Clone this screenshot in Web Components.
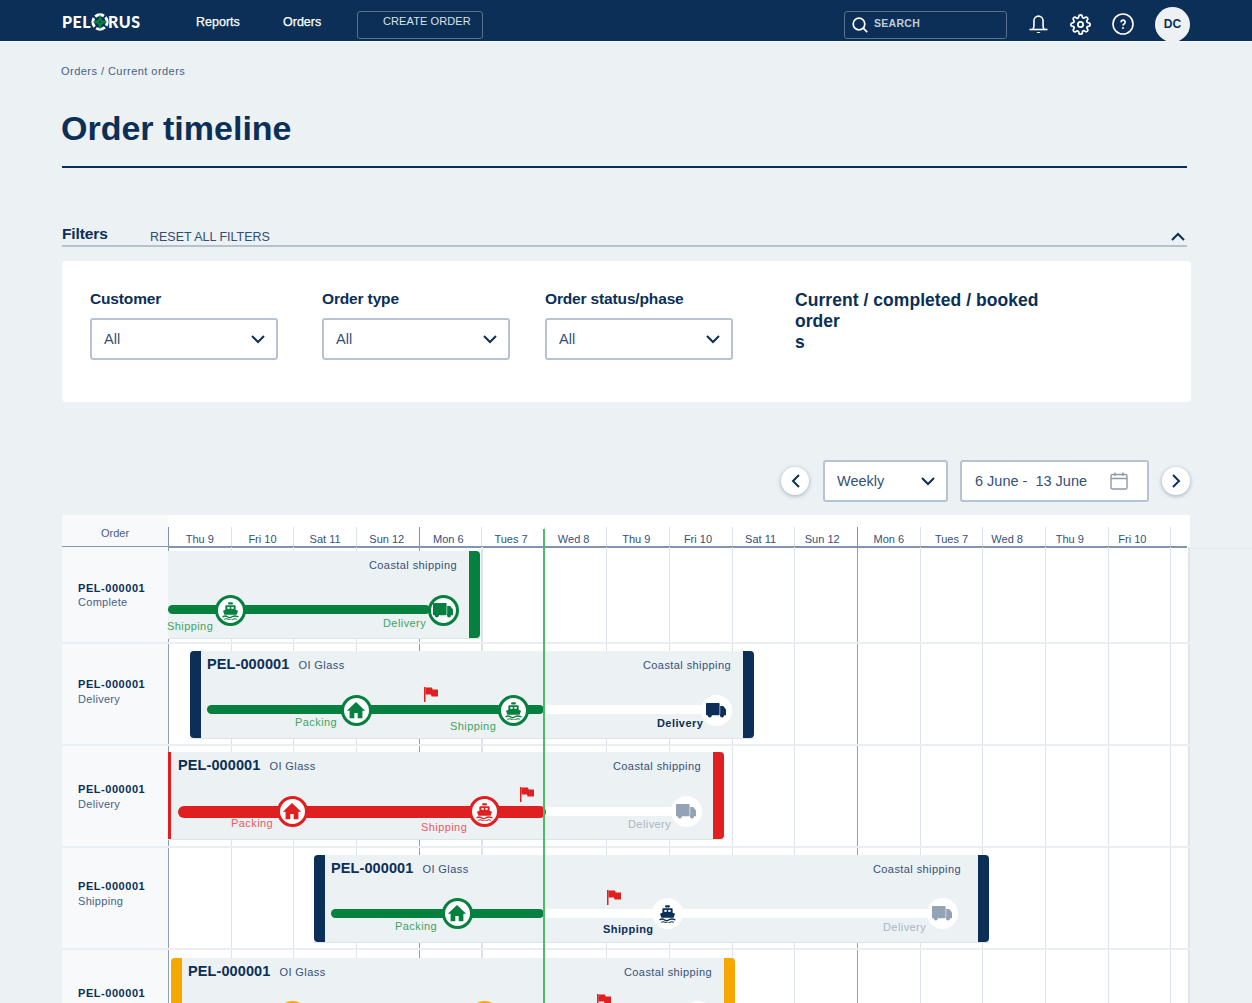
<!DOCTYPE html>
<html lang="en">
<head>
<meta charset="utf-8">
<title>Order timeline</title>
<style>
  html, body { margin: 0; height: 100%; overflow: hidden; }
  body { background: #ecf1f4; color: #0b2f56; font-family: "Liberation Sans", Arial, sans-serif; }
</style>
</head>
<body>
<app-header></app-header>
<page-title crumbs="Orders / Current orders" heading="Order timeline"></page-title>
<filter-panel></filter-panel>
<range-controls></range-controls>
<order-timeline>
  <order-row height="97" order="PEL-000001" status="Complete">
    <gantt-bar left="0" top="4" width="312" end="green" service="Coastal shipping" service-right="23">
      <gantt-seg from="0" to="262" y="58" tone="green"></gantt-seg>
      <gantt-stop x="62" y="59" kind="ship" tone="green" label="Shipping" lx="-1" ly="75"></gantt-stop>
      <gantt-stop x="275" y="59" kind="truck" tone="green" label="Delivery" lx="215" ly="72"></gantt-stop>
    </gantt-bar>
  </order-row>
  <order-row height="102" info-top="33" order="PEL-000001" status="Delivery">
    <gantt-bar left="22" top="7" width="564" start="navy" end="navy" code="PEL-000001" customer="OI Glass" service="Coastal shipping" service-right="23">
      <gantt-seg from="17" to="354" y="58" tone="green"></gantt-seg>
      <gantt-seg from="354" to="520" y="58" tone="white"></gantt-seg>
      <gantt-flag x="234" y="36"></gantt-flag>
      <gantt-stop x="166" y="59" kind="house" tone="green" label="Packing" lx="105" ly="71"></gantt-stop>
      <gantt-stop x="323" y="59" kind="ship" tone="green" label="Shipping" lx="260" ly="75"></gantt-stop>
      <gantt-stop x="526" y="59" kind="truck" tone="active" label="Delivery" lx="467" ly="72"></gantt-stop>
    </gantt-bar>
  </order-row>
  <order-row height="102" order="PEL-000001" status="Delivery">
    <gantt-bar left="0" top="6" width="556" start="red-thin" end="red" code="PEL-000001" customer="OI Glass" service="Coastal shipping" service-right="23">
      <gantt-seg from="10" to="378" y="59" tone="red"></gantt-seg>
      <gantt-seg from="378" to="520" y="59" tone="white"></gantt-seg>
      <gantt-flag x="352" y="35"></gantt-flag>
      <gantt-stop x="124" y="59" kind="house" tone="red" label="Packing" lx="63" ly="71"></gantt-stop>
      <gantt-stop x="316" y="59" kind="ship" tone="red" label="Shipping" lx="253" ly="75"></gantt-stop>
      <gantt-stop x="518" y="59" kind="truck" tone="pending" label="Delivery" lx="460" ly="72"></gantt-stop>
    </gantt-bar>
  </order-row>
  <order-row height="102" info-top="31" order="PEL-000001" status="Shipping">
    <gantt-bar left="146" top="7" width="675" start="navy" end="navy" code="PEL-000001" customer="OI Glass" service="Coastal shipping" service-right="28">
      <gantt-seg from="17" to="230" y="58" tone="green"></gantt-seg>
      <gantt-seg from="230" to="630" y="58" tone="white"></gantt-seg>
      <gantt-flag x="293" y="35"></gantt-flag>
      <gantt-stop x="143" y="58" kind="house" tone="green" label="Packing" lx="81" ly="71"></gantt-stop>
      <gantt-stop x="353" y="58" kind="ship" tone="active" label="Shipping" lx="289" ly="74"></gantt-stop>
      <gantt-stop x="628" y="58" kind="truck" tone="pending" label="Delivery" lx="569" ly="72"></gantt-stop>
    </gantt-bar>
  </order-row>
  <order-row height="102" info-top="36" order="PEL-000001">
    <gantt-bar left="3" top="8" width="564" start="orange" end="orange" code="PEL-000001" customer="OI Glass" service="Coastal shipping" service-right="23">
      <gantt-seg from="17" to="373" y="58" tone="orange"></gantt-seg>
      <gantt-seg from="373" to="520" y="58" tone="white"></gantt-seg>
      <gantt-flag x="426" y="36"></gantt-flag>
      <gantt-stop x="121" y="58" kind="house" tone="orange"></gantt-stop>
      <gantt-stop x="313" y="58" kind="ship" tone="orange"></gantt-stop>
      <gantt-stop x="526" y="58" kind="truck" tone="pending"></gantt-stop>
    </gantt-bar>
  </order-row>
</order-timeline>

<script>
const COLORS = {
  navy: '#0b2f56', green: '#05803f', red: '#e01f20', orange: '#f7a800', white: '#ffffff'
};

const ICONS = {
  ship: `<svg viewBox="0 0 24 24" width="19" height="19" fill="currentColor">
      <rect x="9" y="1.5" width="6" height="3" rx="1"/>
      <path d="M6.5 5.5h11a1 1 0 0 1 1 1V11l3 1.2-1.8 5.3H4.3L2.5 12.2 5.5 11V6.500a1 1 0 0 1 1-1z"/>
      <rect x="8" y="7.500" width="3" height="2.400" fill="#fff"/><rect x="13" y="7.500" width="3" height="2.400" fill="#fff"/>
      <path d="M2 20c2.500-1.600 4-1.600 6 0 2 1.600 4 1.600 6 0 2-1.600 4-1.600 8 0" fill="none" stroke="currentColor" stroke-width="1.700"/>
      <path d="M4 23.200c2.500-1.300 3.500-1.300 5.500 0 2 1.300 3 1.300 5.500 0 2-1.300 3-1.300 5 0" fill="none" stroke="currentColor" stroke-width="1.300"/>
    </svg>`,
  truck: `<svg viewBox="0 0 20 15" width="20" height="15" fill="currentColor">
      <rect x="0" y="0" width="13.600" height="12.300" rx=".8"/>
      <path d="M14.200 3h3l2.800 3.600v5.700h-5.800z"/>
      <circle cx="3.800" cy="12.400" r="2"/><circle cx="16" cy="12.400" r="2"/>
    </svg>`,
  house: `<svg viewBox="0 0 24 24" width="20" height="20" fill="currentColor">
      <path d="M12 2.500 1 12.800h3.300V22h5.700v-6.500h4V22h5.700v-9.200H23z"/>
    </svg>`
};

// shared chevron used by the select boxes
const chevron = `<svg viewBox="0 0 14 9" width="14" height="9" fill="none" stroke="#0b2f56" stroke-width="2"><path d="M1 1l6 6 6-6"/></svg>`;

class AppHeader extends HTMLElement {
  connectedCallback() {
    this.attachShadow({ mode: 'open' }).innerHTML = `
      <style>
        :host { display: flex; align-items: center; box-sizing: border-box; height: 42px; padding: 3px 0 0 62px;
          background: #0b2f56; border-bottom: 1px solid #f7f9fb; color: #fff; font-family: "Liberation Sans", Arial, sans-serif; }
        .logo { display: flex; align-items: center; width: 134px; font: 900 16px/1 Lato, sans-serif; letter-spacing: .5px; }
        .logo svg { margin: 0 -.5px; }
        a { font-size: 12.500px; font-weight: 400; -webkit-text-stroke: .25px #fff; }
        .reports { width: 87px; }
        .orders { width: 74px; }
        .create { box-sizing: border-box; width: 126px; height: 28px; margin-top: 5px; border: 1.500px solid #56728f; border-radius: 3px;
          padding-left: 25px; font-size: 11px; line-height: 19px; letter-spacing: .1px; color: #dbe2ea; }
        .search { display: flex; align-items: center; gap: 6px; box-sizing: border-box; width: 163px; height: 28px; margin: 5px 0 0 361px;
          border: 1.500px solid #56728f; border-radius: 3px; padding-left: 7px; font-size: 10.500px; font-weight: 700; letter-spacing: .3px; color: #c0ccd8; }
        .search span { padding-bottom: 4px; }
        .icons { display: flex; align-items: center; margin: 4px 0 0 22px; }
        .avatar { display: grid; place-items: center; width: 35px; height: 35px; margin-left: 21px; border-radius: 50%;
          background: #edf1f4; color: #0b2f56; font-size: 12px; font-weight: 700; }
        .gear { margin-left: 22px; }
        .help { margin-left: 21px; }
      </style>
      <div class="logo">PEL<svg viewBox="0 0 20 20" width="18" height="18">
          <circle cx="10" cy="10" r="8" fill="none" stroke="#fff" stroke-width="3.200" stroke-dasharray="10.400 2.166" stroke-dashoffset="6"/>
          <path d="M10 1.500l2.300 6.200 6.200 2.300-6.200 2.300L10 18.500l-2.300-6.200L1.500 10l6.200-2.300z" fill="#05803f"/>
          <circle cx="10" cy="10" r="1.100" fill="#0b2f56"/>
        </svg>RUS</div>
      <a class="reports">Reports</a>
      <a class="orders">Orders</a>
      <div class="create">CREATE ORDER</div>
      <div class="search">
        <svg viewBox="0 0 16 16" width="16" height="16" fill="none" stroke="#fff" stroke-width="1.700"><circle cx="7" cy="7" r="5.800"/><path d="M11.200 11.200l4 4"/></svg>
        <span>SEARCH</span>
      </div>
      <div class="icons">
        <svg viewBox="0 0 20 20" width="19" height="20" fill="none" stroke="#fff" stroke-width="1.700">
          <path d="M4 15.500c1-1 1.200-2.500 1.200-4V6.500a4.800 4.800 0 0 1 9.600 0v5c0 1.500.2 3 1.200 4"/><path d="M.5 15.800h19"/><path d="M7.800 18.300h4.400l-1 1.200H8.800z" fill="#fff" stroke="none"/>
        </svg>
        <svg class="gear" viewBox="0 0 24 24" width="21" height="21" fill="none" stroke="#fff" stroke-width="2">
          <path d="M12 15a3 3 0 1 0 0-6 3 3 0 0 0 0 6z"/>
          <path d="M19.4 15a1.65 1.65 0 0 0 .33 1.82l.06.06a2 2 0 0 1 0 2.83 2 2 0 0 1-2.83 0l-.06-.06a1.65 1.65 0 0 0-1.82-.33 1.65 1.65 0 0 0-1 1.51V21a2 2 0 0 1-2 2 2 2 0 0 1-2-2v-.09A1.65 1.65 0 0 0 9 19.4a1.65 1.65 0 0 0-1.82.33l-.06.06a2 2 0 0 1-2.83 0 2 2 0 0 1 0-2.83l.06-.06a1.65 1.65 0 0 0 .33-1.82 1.65 1.65 0 0 0-1.51-1H3a2 2 0 0 1-2-2 2 2 0 0 1 2-2h.09A1.65 1.65 0 0 0 4.600 9a1.65 1.65 0 0 0-.33-1.82l-.06-.06a2 2 0 0 1 0-2.83 2 2 0 0 1 2.83 0l.06.06a1.65 1.65 0 0 0 1.82.33H9a1.65 1.65 0 0 0 1-1.51V3a2 2 0 0 1 2-2 2 2 0 0 1 2 2v.09a1.65 1.65 0 0 0 1 1.51 1.65 1.65 0 0 0 1.82-.33l.06-.06a2 2 0 0 1 2.83 0 2 2 0 0 1 0 2.83l-.06.06a1.65 1.65 0 0 0-.33 1.82V9a1.65 1.65 0 0 0 1.51 1H21a2 2 0 0 1 2 2 2 2 0 0 1-2 2h-.09a1.65 1.65 0 0 0-1.51 1z"/>
        </svg>
        <svg class="help" viewBox="0 0 22 22" width="22" height="22" fill="none" stroke="#fff" stroke-width="1.600">
          <circle cx="11" cy="11" r="10"/>
          <path d="M9 9.200a2.100 2.100 0 1 1 3.100 1.800c-.7.400-1.100.8-1.100 1.500" stroke-width="1.700"/><circle cx="11" cy="15" r="1" fill="#fff" stroke="none"/>
        </svg>
        <div class="avatar">DC</div>
      </div>`;
  }
}

class PageTitle extends HTMLElement {
  connectedCallback() {
    this.attachShadow({ mode: 'open' }).innerHTML = `
      <style>
        :host { display: block; margin: 22px 65px 0 62px; border-bottom: 2px solid #0b2f56; padding-bottom: 17px; }
        .crumbs { margin-left: -1px; font-size: 11px; line-height: 14px; letter-spacing: .46px; color: #46618a; }
        h1 { margin: 29px 0 0 -1px; font-size: 34px; line-height: 42px; font-weight: 700; letter-spacing: 0; color: #0b2f56; }
      </style>
      <div class="crumbs">${this.getAttribute('crumbs')}</div>
      <h1>${this.getAttribute('heading')}</h1>`;
  }
}

class SelectBox extends HTMLElement {
  connectedCallback() {
    this.attachShadow({ mode: 'open' }).innerHTML = `
      <style>
        :host { display: flex; align-items: center; justify-content: space-between; box-sizing: border-box;
          height: 42px; padding: 0 11px 0 12px; background: #fff; border: 2px solid #b7c3d2; border-radius: 3px;
          font-size: 14.500px; color: #34507a; }
      </style>
      <slot></slot>${chevron}`;
  }
}

class FilterPanel extends HTMLElement {
  connectedCallback() {
    this.attachShadow({ mode: 'open' }).innerHTML = `
      <style>
        :host { display: block; margin: 58px 61px 0 62px; }
        .bar { display: flex; align-items: baseline; height: 19px; margin-right: 4px; border-bottom: 2px solid #b7c2ce; position: relative; }
        .bar b { width: 88px; font-size: 15.500px; line-height: 15px; letter-spacing: -.1px; }
        .bar span { font-size: 12.500px; color: #2f4c72; position: relative; top: 2px; }
        .bar svg { position: absolute; right: 2px; top: 6px; }
        .card { display: flex; height: 141px; box-sizing: border-box; margin-top: 14px; padding: 29px 0 0 28px;
          background: #fff; border-radius: 4px; }
        .field { width: 188px; margin-right: 44px; }
        .field.status { margin-right: 62px; }
        label { display: block; height: 19px; margin-bottom: 9px; font-size: 15.500px; line-height: 18px; font-weight: 700; letter-spacing: -.15px; }
        .kinds { font-size: 17.500px; line-height: 21px; font-weight: 700; letter-spacing: .05px; }
        .field:nth-child(2) { margin-right: 35px; }
      </style>
      <div class="bar"><b>Filters</b><span>RESET ALL FILTERS</span>
        <svg viewBox="0 0 14 9" width="14" height="9" fill="none" stroke="#0b2f56" stroke-width="2"><path d="M1 8l6-6 6 6"/></svg>
      </div>
      <div class="card">
        <div class="field"><label>Customer</label><select-box>All</select-box></div>
        <div class="field"><label>Order type</label><select-box>All</select-box></div>
        <div class="field status"><label>Order status/phase</label><select-box>All</select-box></div>
        <div class="kinds">Current / completed / booked<br>order<br>s</div>
      </div>`;
  }
}

class RangeControls extends HTMLElement {
  connectedCallback() {
    this.attachShadow({ mode: 'open' }).innerHTML = `
      <style>
        :host { display: flex; align-items: center; height: 42px; margin: 58px 0 0 781px; }
        .round { display: grid; place-items: center; width: 28px; height: 28px; border-radius: 50%; background: #fff;
          box-shadow: 0 1px 4px rgba(11,47,86,.35); }
        select-box { width: 125px; margin: 0 12px 0 14px; }
        .date { display: flex; align-items: center; justify-content: space-between; box-sizing: border-box; width: 189px; height: 42px;
          margin-right: 13px; padding: 0 19px 0 13px; background: #fff; border: 2px solid #b7c3d2; border-radius: 3px; font-size: 14.500px; color: #34507a; }
      </style>
      <div class="round"><svg viewBox="0 0 9 14" width="9" height="14" fill="none" stroke="#0b2f56" stroke-width="2"><path d="M8 1L2 7l6 6"/></svg></div>
      <select-box>Weekly</select-box>
      <div class="date"><span>6 June -&nbsp; 13 June</span>
        <svg viewBox="0 0 18 18" width="18" height="18" fill="none" stroke="#8e9aa8" stroke-width="1.400"><rect x="1" y="2.500" width="16" height="14.500" rx="1.500"/><path d="M1 6.500h16M5 .5v3.500M13 .5v3.500"/></svg>
      </div>
      <div class="round"><svg viewBox="0 0 9 14" width="9" height="14" fill="none" stroke="#0b2f56" stroke-width="2"><path d="M1 1l6 6-6 6"/></svg></div>`;
  }
}

const DAYS = ['Thu 9', 'Fri 10', 'Sat 11', 'Sun 12', 'Mon 6', 'Tues 7', 'Wed 8', 'Thu 9', 'Fri 10', 'Sat 11', 'Sun 12',
  'Mon 6', 'Tues 7', 'Wed 8', 'Thu 9', 'Fri 10', ''];
const STRONG = [0, 4, 11];
// the day labels drift left of their cell centres in the design
const DRIFT = [0, 0, 0, 2, 4, 4, 4, 4, 6, 6, 8, 0, 0, 14, 14, 14, 0];

class OrderTimeline extends HTMLElement {
  connectedCallback() {
    const head = DAYS.map((d, i) => `<div class="day ${STRONG.includes(i) ? 'strong' : ''}" style="padding-right:${DRIFT[i]}px">${d}</div>`).join('');
    const lines = DAYS.map((d, i) => `<i class="${STRONG.includes(i) ? 'strong' : ''} ${i === 5 ? 'wide' : ''}"></i>`).join('');
    this.attachShadow({ mode: 'open' }).innerHTML = `
      <style>
        :host { display: block; position: relative; margin: 13px 62px 0 62px; height: 500px; background: #fff; font-size: 11px; }
        :host::after { content: ''; position: absolute; left: 100%; top: 33px; width: 62px; height: 1px; background: #e3e8ec; }
        .head { display: flex; height: 33px; box-sizing: border-box; margin-right: 3px; border-bottom: 2px solid #7f95b0; overflow: hidden; }
        .order { flex: 0 0 106px; padding-top: 12px; text-align: center; background: #f7f9fb; color: #46618a; font-size: 11px; }
        .day { flex: 0 0 62.650px; box-sizing: border-box; margin-top: 12px; padding-top: 6px; border-left: 1.500px solid #dde3ea;
          text-align: center; color: #34507a; white-space: nowrap; }
        .day.strong { border-left: 1.500px solid #7f95b0; }
        .day:first-of-type { margin-top: 0; padding-top: 18px; }
        .body { position: relative; height: 467px; margin-top: -1px; overflow: hidden; }
        .body::before { content: ''; position: absolute; inset: 0 auto 0 0; width: 106px; background: #f7f9fb; }
        .lines { position: absolute; left: 106px; top: 0; bottom: 0; right: 0; display: flex; }
        .lines i { flex: 0 0 62.650px; box-sizing: border-box; border-left: 1.500px solid #dde3ea; }
        .lines i.strong { border-left: 1.500px solid #8b9fb7; }
        .lines i.wide { border-left-width: 2px; }
        .edge { position: absolute; right: 0; top: 0; bottom: 0; width: 2px; background: #dfe4e9; }
        .now { position: absolute; left: 481px; top: 14px; height: 486px; width: 2px; background: #4cbc6a; z-index: 5; }
      </style>
      <div class="head"><div class="order">Order</div>${head}</div>
      <div class="body">
        <div class="lines">${lines}</div>
        <div class="edge"></div>
        <slot></slot>
      </div>
      <div class="now"></div>`;
  }
}

class OrderRow extends HTMLElement {
  connectedCallback() {
    const status = this.getAttribute('status') || '';
    const infoTop = this.getAttribute('info-top');
    const place = infoTop ? `top: ${infoTop}px;` : 'top: 50%; transform: translateY(-50%);';
    this.attachShadow({ mode: 'open' }).innerHTML = `
      <style>
        :host { display: block; position: relative; box-sizing: border-box; height: ${this.getAttribute('height')}px;
          border-bottom: 2px solid #e9eef2; }
        .info { position: absolute; left: 16px; ${place} font-size: 11px; line-height: 14.500px; letter-spacing: .3px; color: #46618a; }
        b { display: block; color: #0b2f56; letter-spacing: .55px; }
        .track { position: absolute; left: 106px; top: 0; right: 0; bottom: 0; }
      </style>
      <div class="info"><b>${this.getAttribute('order')}</b>${status}</div>
      <div class="track"><slot></slot></div>`;
  }
}

class GanttBar extends HTMLElement {
  connectedCallback() {
    const a = n => this.getAttribute(n);
    const start = a('start'), end = a('end');
    const startW = start === 'red-thin' ? 3 : 11;
    const startColor = start ? COLORS[start.replace('-thin', '')] : 'transparent';
    const title = a('code') ? `<b>${a('code')}</b><span>${a('customer')}</span>` : '';
    this.attachShadow({ mode: 'open' }).innerHTML = `
      <style>
        :host { display: flex; position: absolute; left: ${a('left')}px; top: ${a('top')}px; width: ${a('width')}px; height: 87px;
          background: #ecf1f4; box-shadow: 0 1px 0 #dfe4e9; color: #34507a; }
        .start { flex: 0 0 ${start ? startW : 0}px; background: ${startColor}; border-radius: ${start === 'red-thin' ? 0 : '4px 0 0 4px'}; }
        .end { flex: 0 0 11px; background: ${COLORS[end]}; border-radius: 0 4px 4px 0; }
        .main { flex: 1; display: flex; justify-content: space-between; align-items: flex-start; padding: 5px ${a('service-right') - 11}px 0 ${start === 'red-thin' ? 7 : 6}px; }
        .code b { font-size: 14.500px; line-height: 17px; color: #0b2f56; letter-spacing: .1px; }
        .code span { margin-left: 9px; font-size: 11px; letter-spacing: .42px; }
        .service { margin-top: 2px; font-size: 11px; line-height: 14px; letter-spacing: .42px; margin-left: auto; }
      </style>
      <div class="start"></div>
      <div class="main"><div class="code">${title}</div><div class="service">${a('service')}</div></div>
      <div class="end"></div>
      <slot></slot>`;
  }
}

class GanttSeg extends HTMLElement {
  connectedCallback() {
    const a = n => this.getAttribute(n);
    const white = a('tone') === 'white';
    const h = a('tone') === 'red' ? 12 : 9;
    this.attachShadow({ mode: 'open' }).innerHTML = `
      <style>
        :host { position: absolute; left: ${a('from')}px; width: ${a('to') - a('from')}px; top: ${a('y') - (h - 9) / 2 - 4}px; height: ${h}px;
          background: ${COLORS[a('tone')]}; border-radius: ${white ? 0 : h / 2 + 'px'}; }
      </style>`;
  }
}

class GanttFlag extends HTMLElement {
  connectedCallback() {
    this.attachShadow({ mode: 'open' }).innerHTML = `
      <style>:host { position: absolute; left: ${this.getAttribute('x')}px; top: ${this.getAttribute('y')}px; width: 14px; height: 15px; }</style>
      <svg viewBox="0 0 14 15" width="14" height="15" fill="#e01f20" style="display:block">
        <path d="M0 0h1.500v15H0z"/><path d="M1.500 .5H8l.6 2H14v7H7.500L7 7.500H1.500z"/>
      </svg>`;
  }
}

const TONES = {
  green: { ring: COLORS.green, icon: COLORS.green, text: '#3da45f' },
  red: { ring: COLORS.red, icon: COLORS.red, text: '#ea5a5e' },
  orange: { ring: COLORS.orange, icon: COLORS.orange, text: '#f0b040' },
  active: { ring: '#fff', icon: COLORS.navy, text: COLORS.navy, bold: true },
  pending: { ring: '#fff', icon: '#93a2b5', text: '#aab5c5' }
};

class GanttStop extends HTMLElement {
  connectedCallback() {
    const a = n => this.getAttribute(n);
    const t = TONES[a('tone')];
    const label = a('label') ? `<span>${a('label')}</span>` : '';
    this.attachShadow({ mode: 'open' }).innerHTML = `
      <style>
        :host { position: absolute; left: 0; top: 0; }
        .dot { position: absolute; left: ${a('x') - 15.5}px; top: ${a('y') - 15.5}px; display: grid; place-items: center; box-sizing: border-box;
          width: 31px; height: 31px; border-radius: 50%; background: #fff; border: 3px solid ${t.ring}; color: ${t.icon}; z-index: 1; }
        svg { display: block; }
        span { position: absolute; left: ${a('lx')}px; top: ${a('ly') - 7}px; font-size: 11px; line-height: 14px; letter-spacing: .42px; white-space: nowrap;
          color: ${t.text}; font-weight: ${t.bold ? 700 : 400}; }
      </style>
      <div class="dot">${ICONS[a('kind')]}</div>${label}`;
  }
}

customElements.define('app-header', AppHeader);
customElements.define('page-title', PageTitle);
customElements.define('select-box', SelectBox);
customElements.define('filter-panel', FilterPanel);
customElements.define('range-controls', RangeControls);
customElements.define('order-timeline', OrderTimeline);
customElements.define('order-row', OrderRow);
customElements.define('gantt-bar', GanttBar);
customElements.define('gantt-seg', GanttSeg);
customElements.define('gantt-flag', GanttFlag);
customElements.define('gantt-stop', GanttStop);
</script>
</body>
</html>
